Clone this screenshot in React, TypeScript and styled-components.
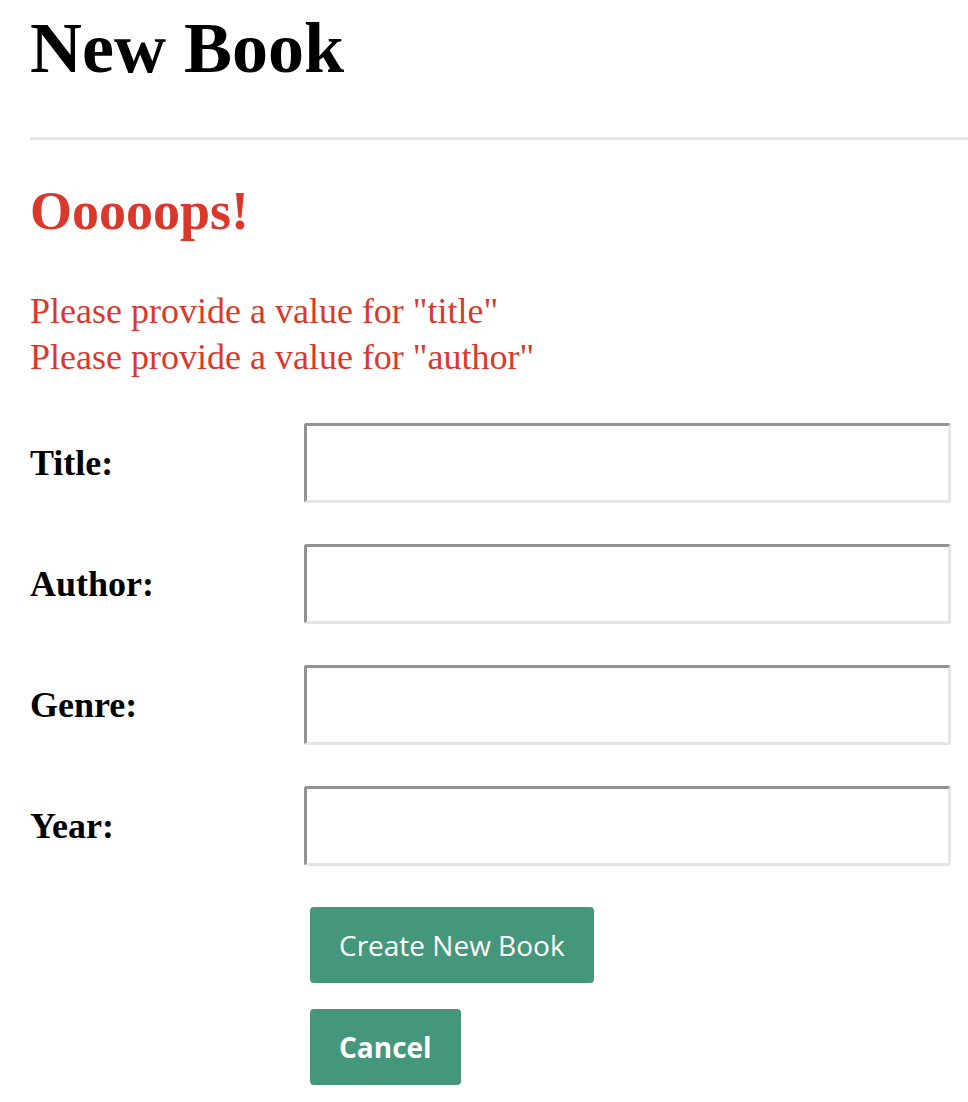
import { Fragment } from "react";
import styled, { createGlobalStyle } from "styled-components";

const GlobalStyle = createGlobalStyle`
	html, body {
		margin: 0;
		padding: 0;
		background: #ffffff;
	}
	body {
		font-family: "Liberation Serif", "Times New Roman", serif;
		color: #000000;
	}
`;

const Page = styled.main`
	padding: 8px 0 0 30px;
	width: 938px;
`;

const Title = styled.h1`
	margin: 0;
	font-size: 72px;
	line-height: 80px;
	font-weight: bold;
`;

const Rule = styled.hr`
	margin: 49px 0 0;
	border: 0;
	height: 3px;
	background: #e6e6e6;
`;

const ErrorTitle = styled.h2`
	margin: 40px 0 0;
	font-size: 54px;
	line-height: 62px;
	font-weight: bold;
	color: #d9382b;
`;

const ErrorList = styled.ul`
	margin: 46px 0 0;
	padding: 0;
	list-style: none;
	font-size: 36px;
	line-height: 46px;
	color: #d9382b;
`;

const Form = styled.form`
	margin-top: 43px;
	display: grid;
	grid-template-columns: 274px 647px;
	row-gap: 41px;
	align-items: center;
`;

const Label = styled.label`
	font-size: 36px;
	font-weight: bold;
`;

const Input = styled.input`
	box-sizing: border-box;
	height: 80px;
	width: 100%;
	margin: 0;
	padding: 0 12px;
	background: #ffffff;
	border-style: solid;
	border-width: 3px;
	border-color: #939393 #e6e6e6 #e6e6e6 #939393;
	border-radius: 3px;
	font-size: 30px;
	outline: none;
`;

const Actions = styled.div`
	grid-column: 2;
	display: flex;
	flex-direction: column;
	align-items: flex-start;
	gap: 26px;
	padding-left: 6px;
`;

const Button = styled.button<{ $bold?: boolean }>`
	height: 76px;
	padding: 0 29px;
	border: 0;
	border-radius: 4px;
	background: #44977a;
	color: #ffffff;
	font-family: "Open Sans", "DejaVu Sans", sans-serif;
	font-size: 28px;
	font-weight: ${({ $bold }) => ($bold ? 700 : 400)};
	line-height: 36px;
	cursor: pointer;
`;

const fields = ["Title", "Author", "Genre", "Year"];

const App = () => {
	return (
		<>
			<GlobalStyle />
			<Page>
				<Title>New Book</Title>
				<Rule />
				<ErrorTitle>Ooooops!</ErrorTitle>
				<ErrorList>
					<li>Please provide a value for "title"</li>
					<li>Please provide a value for "author"</li>
				</ErrorList>
				<Form onSubmit={(e) => e.preventDefault()}>
					{fields.map((f) => (
						<Fragment key={f}>
							<Label htmlFor={f.toLowerCase()}>{f}:</Label>
							<Input id={f.toLowerCase()} type="text" />
						</Fragment>
					))}
					<Actions>
						<Button type="submit">Create New Book</Button>
						<Button type="button" $bold>
							Cancel
						</Button>
					</Actions>
				</Form>
			</Page>
		</>
	);
};

export default App;
